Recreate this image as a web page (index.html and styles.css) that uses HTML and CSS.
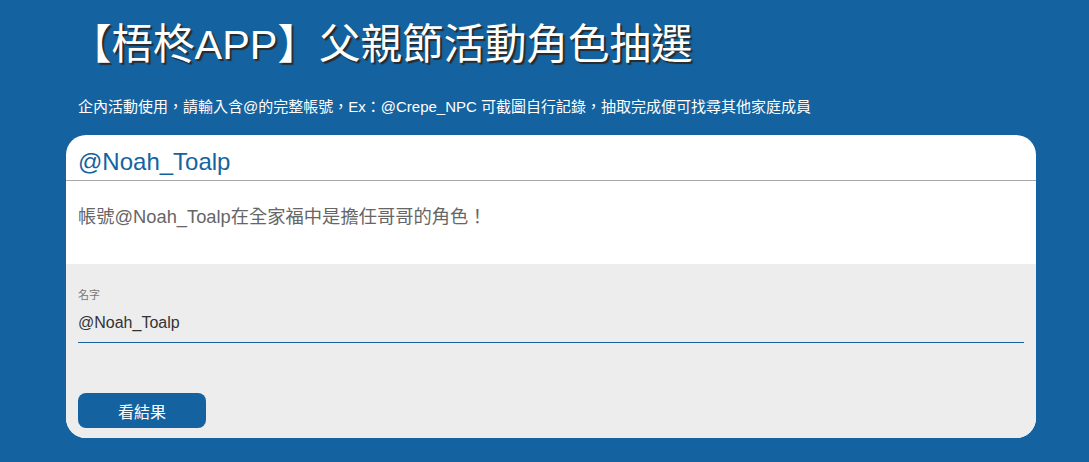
FILE: index.html
```html
<!DOCTYPE html>
<html lang="zh-Hant">
<head>
<meta charset="utf-8">
<link rel="stylesheet" href="styles.css">
</head>
<body>
<div class="page">
  <h1 class="title">【梧柊APP】父親節活動角色抽選</h1>
  <p class="subtitle">企內活動使用，請輸入含@的完整帳號，Ex：@Crepe_NPC 可截圖自行記錄，抽取完成便可找尋其他家庭成員</p>
  <div class="card">
    <div class="card-head">@Noah_Toalp</div>
    <div class="card-body">帳號@Noah_Toalp在全家福中是擔任哥哥的角色！</div>
    <div class="card-form">
      <label class="field-label">名字</label>
      <div class="field-input">@Noah_Toalp</div>
      <button class="btn">看結果</button>
    </div>
  </div>
</div>
</body>
</html>
```
FILE: styles.css
```css
html, body {
  margin: 0;
  padding: 0;
  background: #1463a0;
  font-family: "Liberation Sans", Arial, "Noto Sans CJK TC", sans-serif;
}
.page {
  padding: 0 53px 0 66px;
}
.title {
  margin: 0;
  padding: 21px 0 0 4px;
  font-size: 41.5px;
  font-weight: normal;
  line-height: 48px;
  color: #fff;
  text-shadow: 2px 2px 1px #2a2a2a;
}
.subtitle {
  margin: 0;
  padding: 29px 0 0 12px;
  font-size: 15px;
  line-height: 17px;
  color: #fff;
}
.card {
  margin-top: 20px;
  width: 970px;
  border-radius: 20px;
  overflow: hidden;
  background: #fff;
}
.card-head {
  height: 46px;
  box-sizing: border-box;
  padding: 13px 12px 0;
  font-size: 24px;
  line-height: 28px;
  color: #1463a0;
  border-bottom: 1px solid #a8a8a8;
}
.card-body {
  height: 83px;
  box-sizing: border-box;
  padding: 25px 12px 0;
  font-size: 18.3px;
  line-height: 22px;
  color: #666;
}
.card-form {
  background: #ededed;
  padding: 24px 12px 10px;
  display: flex;
  flex-direction: column;
  align-items: flex-start;
}
.field-label {
  font-size: 11px;
  line-height: 14px;
  color: #777;
}
.field-input {
  align-self: stretch;
  margin-top: 12px;
  padding-bottom: 10px;
  font-size: 16px;
  line-height: 18px;
  color: #333;
  border-bottom: 1px solid #1463a0;
}
.btn {
  margin-top: 50px;
  width: 128px;
  height: 35px;
  border: none;
  border-radius: 8px;
  background: #1463a0;
  color: #fff;
  font-family: "Liberation Sans", Arial, "Noto Sans CJK TC", sans-serif;
  font-size: 16px;
}
```
